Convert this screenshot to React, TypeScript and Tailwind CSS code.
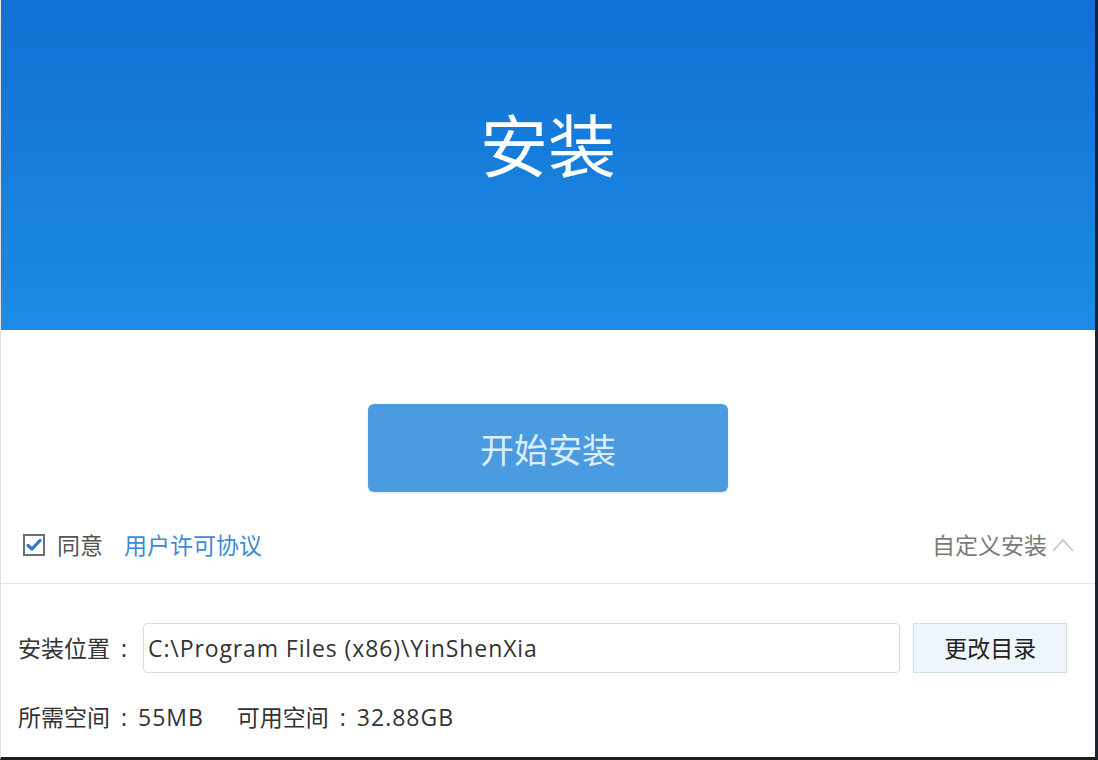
const font = { fontFamily: '"Open Sans", "Noto Sans CJK SC", sans-serif' };
const cjk = { fontFamily: '"Noto Sans CJK SC", sans-serif' };

const CheckBox = () => (
  <span className="flex h-[22px] w-[22px] items-center justify-center border-2 border-[#66707a] bg-white">
    <svg width="16" height="14" viewBox="0 0 16 14" fill="none">
      <path d="M2 7.5 L6 11 L14 2.5" stroke="#2c78c2" strokeWidth="3.2" strokeLinecap="round" strokeLinejoin="round" />
    </svg>
  </span>
);

const ChevronUp = () => (
  <svg width="24" height="16" viewBox="0 0 24 16" fill="none">
    <path d="M2 14 L12 3 L22 14" stroke="#c4c4c4" strokeWidth="1.6" />
  </svg>
);

// centred full-width colon, as the original font draws it
const Colon = () => <span className="inline-block w-[28px] text-center">:</span>;

export default function App() {
  return (
    <div
      className="flex h-[760px] w-[1098px] flex-col overflow-hidden border-b-[3px] border-l border-r-[3px] border-b-[#1d1d1d] border-l-[#e2e2e2] border-r-[#1d2230] bg-white"
      style={font}
    >
      {/* Header */}
      <div className="flex h-[330px] shrink-0 justify-center bg-gradient-to-b from-[#1170d3] to-[#1d8be5] pt-[109px]">
        <h1 className="text-[68px] font-normal leading-none text-white" style={cjk}>
          安装
        </h1>
      </div>

      {/* Main action */}
      <div className="flex justify-center pt-[74px]">
        <button
          className="h-[88px] w-[360px] rounded-[6px] bg-[#4a9be0] text-[34px] text-[#dcedfb] shadow-[0_1px_3px_rgba(0,0,0,0.12)]"
          style={cjk}
        >
          开始安装
        </button>
      </div>

      {/* Agreement row */}
      <div className="mt-[33px] flex h-[40px] items-center border-b border-[#e6e6e6] pl-[22px] pr-[20px]" style={{ boxSizing: "content-box", paddingBottom: 18 }}>
        <CheckBox />
        <span className="ml-[12px] text-[23px] text-[#555]">同意</span>
        <span className="ml-[21px] text-[23px] text-[#3d8bd3]">用户许可协议</span>
        <span className="ml-auto text-[23px] text-[#7a7a7a]">自定义安装</span>
        <span className="ml-[4px]">
          <ChevronUp />
        </span>
      </div>

      {/* Install path */}
      <div className="mt-[39px] flex h-[50px] items-center pl-[17px] pr-[28px]">
        <span className="w-[125px] shrink-0 text-[23px] text-[#333]">
          安装位置<Colon />
        </span>
        <div className="flex h-full w-[759px] items-center rounded-[4px] border border-[#d9d9d9] px-[4px] text-[23px] tracking-[0.9px] text-[#333]">
          C:\Program Files (x86)\YinShenXia
        </div>
        <button className="ml-[13px] h-full w-[154px] border border-[#cfdfe8] bg-[#eef6fc] text-[23px] text-[#222]">
          更改目录
        </button>
      </div>

      {/* Space info */}
      <div className="mt-[27px] flex pl-[17px] text-[23px] text-[#333]">
        <span>
          所需空间<Colon />
          <span className="tracking-[1px]">55MB</span>
        </span>
        <span className="ml-[33px]">
          可用空间<Colon />
          <span className="tracking-[1px]">32.88GB</span>
        </span>
      </div>
    </div>
  );
}
